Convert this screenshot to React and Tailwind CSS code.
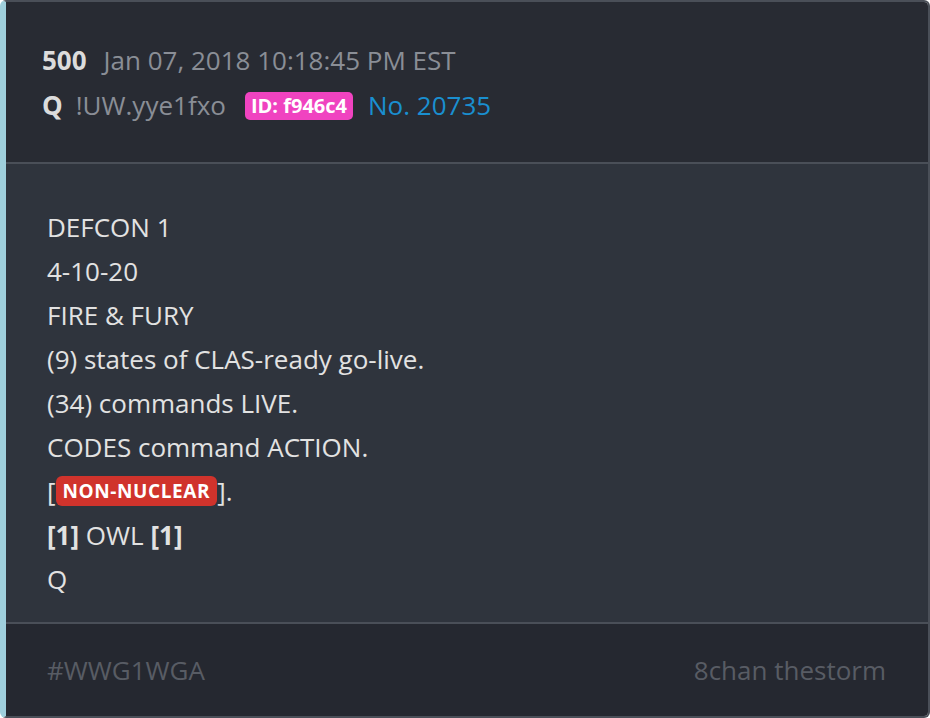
export default function App() {
  const font = { fontFamily: '"Open Sans", "Noto Sans", sans-serif' };
  return (
    <div className="w-[930px] h-[718px] bg-white" style={font}>
      <div className="w-[930px] h-[718px] flex flex-col overflow-hidden rounded-[6px] border-t-2 border-r-2 border-b-2 border-[#4a4f58] border-l-[6px] border-l-[#9fcfdc]">
        <div className="h-[160px] shrink-0 bg-[#282b33] pl-[36px] pt-[39px]">
          <div className="flex items-baseline h-[43px] text-[26px]">
            <span className="font-bold text-[#dcdcdc]">500</span>
            <span className="ml-[17px] text-[#8a8e96]">Jan 07, 2018 10:18:45 PM EST</span>
          </div>
          <div className="flex items-center h-[43px] text-[26px]">
            <span className="font-bold text-[#dcdcdc]">Q</span>
            <span className="ml-[13px] text-[#8a8e96]">!UW.yye1fxo</span>
            <span className="ml-[19px] rounded-[5px] bg-[#f043c0] px-[6px] h-[28px] flex items-center text-[20px] font-bold text-white">ID: f946c4</span>
            <span className="ml-[15px] text-[#1a8fd0]">No. 20735</span>
          </div>
        </div>
        <div className="h-[2px] shrink-0 bg-[#4a4f58]" />
        <div className="h-[458px] shrink-0 bg-[#2f343d] pl-[41px] pt-[41px] text-[26px] text-[#e2e2e2] leading-[44px]">
          <div>DEFCON 1</div>
          <div>4-10-20</div>
          <div>FIRE &amp; FURY</div>
          <div>(9) states of CLAS-ready go-live.</div>
          <div>(34) commands LIVE.</div>
          <div>CODES command ACTION.</div>
          <div className="flex items-center">
            <span>[</span>
            <span className="rounded-[6px] bg-[#d0332c] px-[7px] h-[30px] flex items-center text-[19px] font-bold tracking-[0.6px] text-white">NON-NUCLEAR</span>
            <span>].</span>
          </div>
          <div><span className="font-bold">[1]</span> OWL <span className="font-bold">[1]</span></div>
          <div>Q</div>
        </div>
        <div className="h-[2px] shrink-0 bg-[#4a4f58]" />
        <div className="flex-1 bg-[#252830] flex items-center justify-between pl-[41px] pr-[42px] text-[26px] text-[#585c64]">
          <span>#WWG1WGA</span>
          <span>8chan thestorm</span>
        </div>
      </div>
    </div>
  );
}
